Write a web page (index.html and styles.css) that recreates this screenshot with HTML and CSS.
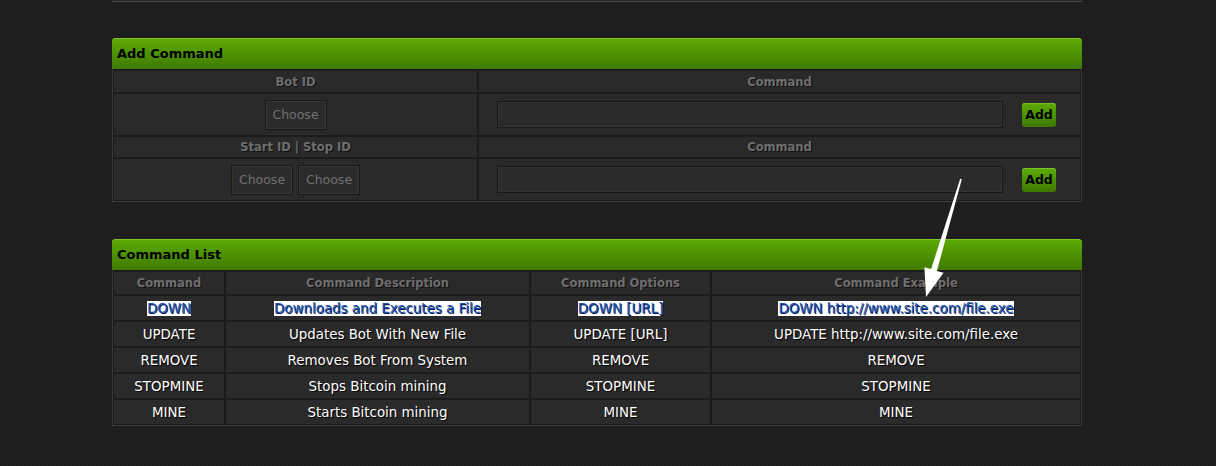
FILE: index.html
```html
<!DOCTYPE html>
<html>
<head>
<meta charset="utf-8">
<link rel="stylesheet" href="styles.css">
</head>
<body>
<div class="page">
  <div class="stub"></div>

  <section class="panel panel-add">
    <h2 class="panel-title">Add Command</h2>
    <table class="grid grid-add">
      <tr class="head">
        <th class="col-id">Bot ID</th>
        <th>Command</th>
      </tr>
      <tr class="form">
        <td><div class="choices"><button class="choose">Choose</button></div></td>
        <td><div class="cmd"><input class="cmd-input" type="text"><button class="add">Add</button></div></td>
      </tr>
      <tr class="head head-range">
        <th>Start ID | Stop ID</th>
        <th>Command</th>
      </tr>
      <tr class="form">
        <td><div class="choices"><button class="choose">Choose</button><button class="choose">Choose</button></div></td>
        <td><div class="cmd"><input class="cmd-input" type="text"><button class="add">Add</button></div></td>
      </tr>
    </table>
  </section>

  <section class="panel panel-list">
    <h2 class="panel-title">Command List</h2>
    <table class="grid grid-list">
      <tr class="head">
        <th class="c1">Command</th>
        <th class="c2">Command Description</th>
        <th class="c3">Command Options</th>
        <th>Command Example</th>
      </tr>
      <tr class="row">
        <td><span class="sel">DOWN</span></td>
        <td><span class="sel">Downloads and Executes a File</span></td>
        <td><span class="sel">DOWN [URL]</span></td>
        <td><span class="sel">DOWN http://www.site.com/file.exe</span></td>
      </tr>
      <tr class="row">
        <td>UPDATE</td>
        <td>Updates Bot With New File</td>
        <td>UPDATE [URL]</td>
        <td>UPDATE http://www.site.com/file.exe</td>
      </tr>
      <tr class="row">
        <td>REMOVE</td>
        <td>Removes Bot From System</td>
        <td>REMOVE</td>
        <td>REMOVE</td>
      </tr>
      <tr class="row">
        <td>STOPMINE</td>
        <td>Stops Bitcoin mining</td>
        <td>STOPMINE</td>
        <td>STOPMINE</td>
      </tr>
      <tr class="row">
        <td>MINE</td>
        <td>Starts Bitcoin mining</td>
        <td>MINE</td>
        <td>MINE</td>
      </tr>
    </table>
  </section>

  <svg class="arrow" width="1216" height="466" viewBox="0 0 1216 466">
    <polygon points="960.2,178.8 961.8,179.2 936.9,270.9 943.6,272.8 926,297 924.4,267.2 931.1,269.1" fill="#ffffff"/>
  </svg>
</div>
</body>
</html>
```
FILE: styles.css
```css
html, body {
  margin: 0;
  padding: 0;
}
body {
  background-color: #1c1c1c;
  background-image:
    linear-gradient(45deg, rgba(255,255,255,0.015) 25%, transparent 25%, transparent 75%, rgba(255,255,255,0.015) 75%),
    linear-gradient(45deg, rgba(255,255,255,0.015) 25%, transparent 25%, transparent 75%, rgba(255,255,255,0.015) 75%);
  background-size: 4px 4px;
  background-position: 0 0, 2px 2px;
  font-family: "DejaVu Sans", Verdana, sans-serif;
  width: 1216px;
  height: 466px;
  overflow: hidden;
}
.page {
  width: 970px;
  margin-left: 112px;
}
.stub {
  height: 1px;
  background: #262626;
  border-bottom: 1px solid #484848;
}
.panel {
  margin-top: 36px;
}
.panel-list {
  margin-top: 37px;
}
.panel-title {
  margin: 0;
  height: 31px;
  line-height: 32px;
  padding-left: 5px;
  font-size: 13px;
  font-weight: bold;
  color: #000;
  border-radius: 4px 4px 0 0;
  background: linear-gradient(#5dab05, #3f7a00);
  box-shadow: inset 0 1px 0 #7cc42a;
}
.grid {
  width: 100%;
  border-collapse: separate;
  border-spacing: 0;
  border: 1px solid #3a3a3a;
  border-top-color: #1a1a1a;
  table-layout: fixed;
}
.grid th,
.grid td {
  padding: 0;
  border: 1px solid #1b1b1b;
  background: #2a2a2a;
  text-align: center;
  vertical-align: middle;
}
.grid th {
  font-size: 11.5px;
  font-weight: bold;
  color: #6f6f6f;
  text-shadow: 1px 1px 0 #111;
}
.grid-add .head th {
  height: 21px;
}
.grid-add .head-range th {
  height: 20px;
}
.grid-add .form td {
  height: 41px;
}
.col-id {
  width: 363px;
}
.choices {
  display: flex;
  justify-content: center;
  gap: 5px;
}
.choose {
  width: 62px;
  height: 30px;
  padding: 0;
  font-family: "DejaVu Sans", Verdana, sans-serif;
  font-size: 12.5px;
  color: #707070;
  background: #2b2b2b;
  border: 1px solid #181818;
  box-shadow: inset 0 0 0 1px #363636;
}
.cmd {
  display: flex;
  align-items: center;
  gap: 19px;
  padding-left: 18px;
}
.cmd-input {
  width: 506px;
  height: 27px;
  box-sizing: border-box;
  margin: 0;
  background: #2b2b2b;
  border: 1px solid #181818;
  box-shadow: inset 0 0 0 1px #333;
}
.add {
  width: 34px;
  height: 24px;
  padding: 0;
  border: none;
  border-radius: 3px;
  font-family: "DejaVu Sans", Verdana, sans-serif;
  font-size: 12.5px;
  font-weight: bold;
  color: #000;
  background: linear-gradient(#5cab04, #3e7800);
  box-shadow: inset 0 1px 0 #79c128;
}
.grid-list .head th {
  height: 22px;
}
.grid-list .row td {
  height: 24px;
  font-size: 13.4px;
  color: #fff;
  text-shadow: 1px 1px 1px #000;
}
.c1 { width: 110px; }
.c2 { width: 303px; }
.c3 { width: 179px; }
.sel {
  background: #fff;
  color: #1a50b8;
  text-shadow: 1px 1px 0 #0a1a3a;
}
.arrow {
  position: absolute;
  left: 0;
  top: 0;
  pointer-events: none;
}
```
